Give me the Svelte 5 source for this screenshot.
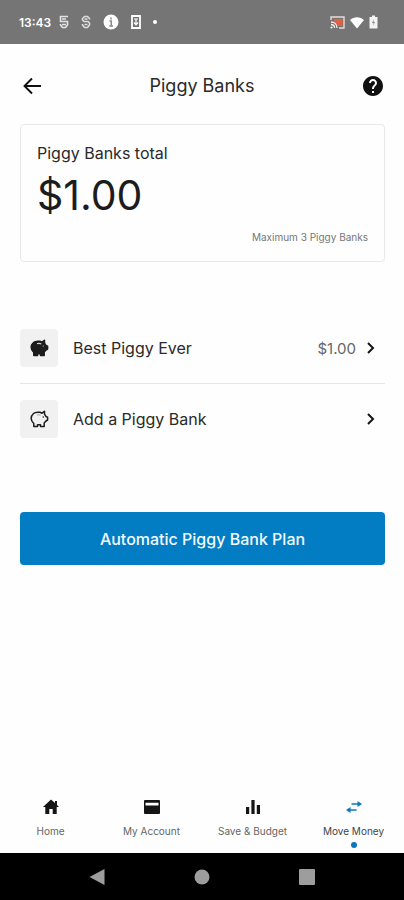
<script lang="ts">
  type Row = {
    id: string;
    label: string;
    amount?: string;
    filled: boolean;
  };

  type Tab = {
    id: string;
    label: string;
  };

  const rows: Row[] = [
    { id: 'best', label: 'Best Piggy Ever', amount: '$1.00', filled: true },
    { id: 'add', label: 'Add a Piggy Bank', filled: false },
  ];

  const tabs: Tab[] = [
    { id: 'home', label: 'Home' },
    { id: 'account', label: 'My Account' },
    { id: 'budget', label: 'Save & Budget' },
    { id: 'move', label: 'Move Money' },
  ];

  let active = $state('move');
</script>

<div class="screen">
  <div class="status">
    <div class="status-left">
      <span class="clock">13:43</span>
      <svg width="10" height="14" viewBox="0 0 10 14" fill="none" stroke="#e4e4e4" stroke-width="1.6">
        <path d="M9 1.5H1.5V6.5H8.5V10L6.5 12.5H3.5L1.5 10V9M3 4H7M3 9.5H7" />
      </svg>
      <svg width="10" height="14" viewBox="0 0 10 14" fill="none" stroke="#dcdcdc" stroke-width="1.6">
        <path d="M8.5 4.5V3.5L6.5 1.5H3.5L1.5 3.5V5L3 6.5H7L8.5 8V10L6.5 12.5H3.5L1.5 10V9M3.5 4H6.5M3.5 9.5H6.5" />
      </svg>
      <svg width="16" height="16" viewBox="0 0 16 16">
        <circle cx="8" cy="8" r="7.5" fill="#fff" />
        <path d="M8 3.5V5.5M6.5 7H8.3V12M6.3 12H10" fill="none" stroke="#8a8a8a" stroke-width="1.5" />
      </svg>
      <svg width="10" height="14" viewBox="0 0 10 14">
        <path d="M1 1H9V13H1Z" fill="none" stroke="#fff" stroke-width="1.8" />
        <path d="M5 3.5V9M3 7.5L5 9.8L7 7.5M3 4H7" fill="none" stroke="#fff" stroke-width="1.2" />
      </svg>
      <span class="more"></span>
    </div>
    <div class="status-right">
      <svg width="15" height="13" viewBox="0 0 15 13">
        <path d="M4 3H12.5V10H8L4 6Z" fill="#e2603f" />
        <path d="M1 4V1H14V12H9" fill="none" stroke="#e8dcd8" stroke-width="1.4" />
        <path d="M1 6C4.5 6 7 8.5 7 12M1 8.500C3 8.5 4.5 10 4.5 12" fill="none" stroke="#f1eeee" stroke-width="1.3" />
        <circle cx="1.5" cy="11.5" r="1" fill="#fff" />
      </svg>
      <svg width="16" height="13" viewBox="0 0 16 13">
        <path d="M1 4C5 0.3 11 0.3 15 4L8 12.5Z" fill="#fff" />
      </svg>
      <svg width="9" height="14" viewBox="0 0 9 14">
        <path d="M3 0.5H6V2H8.5V13.5H0.5V2H3Z" fill="#f4f4f4" />
        <path d="M5 4L3 8H4.5L4 11L6 7H4.6Z" fill="#8a8a8a" />
      </svg>
    </div>
  </div>

  <header class="topbar">
    <button type="button" class="icon-btn" aria-label="Back">
      <svg width="24" height="24" viewBox="0 0 24 24" fill="none" stroke="#111" stroke-width="1.9">
        <path d="M22 12H6M13 4.500L5.500 12L13 19.500" />
      </svg>
    </button>
    <h1>Piggy Banks</h1>
    <button type="button" class="icon-btn" aria-label="Help">
      <svg width="24" height="24" viewBox="0 0 24 24">
        <path fill="#111" d="M12 2C6.48 2 2 6.48 2 12s4.48 10 10 10 10-4.48 10-10S17.52 2 12 2zm1 17h-2v-2h2v2zm2.07-7.75l-.9.92C13.45 12.9 13 13.5 13 15h-2v-.5c0-1.1.45-2.1 1.17-2.83l1.24-1.26c.37-.36.59-.86.59-1.41 0-1.1-.9-2-2-2s-2 .9-2 2H8c0-2.21 1.79-4 4-4s4 1.79 4 4c0 .88-.36 1.68-.93 2.25z" />
      </svg>
    </button>
  </header>

  <main>
    <section class="total">
      <h2>Piggy Banks total</h2>
      <p class="sum">$1.00</p>
      <p class="limit">Maximum 3 Piggy Banks</p>
    </section>

    <div class="rows">
      {#each rows as row (row.id)}
        <button type="button" class="row">
          <span class="tile">
            <svg width="20" height="20" viewBox="0 0 20 20">
              <path
                d="M4.5 4.5C6 3 8.5 3 11 3.3L13 4.2L15.5 2.3V5.2L17 7.5L18.6 8.2V11L17 12L15.2 14V17.5H11.5V15.8H8.5V17.5H4.8V14.5C3 12.8 2.2 11.5 2.2 9.5C2.2 7.5 3 5.8 4.5 4.5Z"
                fill={row.filled ? '#1c1c1c' : 'none'}
                stroke="#1c1c1c"
                stroke-width="1.5"
                stroke-linejoin="round"
              />
              {#if row.filled}
                <path d="M8 5.8C9.5 5.3 11 5.4 12.3 6" fill="none" stroke="#d8d8d8" stroke-width="1.2" />
              {:else}
                <path d="M8 6C9.3 5.6 10.5 5.7 11.6 6.2" fill="none" stroke="#999" stroke-width="0.9" />
              {/if}
              <circle cx="14.3" cy="8" r="0.8" fill={row.filled ? '#888' : '#1c1c1c'} />
            </svg>
          </span>
          <span class="label">{row.label}</span>
          {#if row.amount}<span class="amount">{row.amount}</span>{/if}
          <svg width="10" height="14" viewBox="0 0 10 14" fill="none" stroke="#151515" stroke-width="2">
            <path d="M2 2L7 7L2 12" />
          </svg>
        </button>
      {/each}
    </div>

    <button type="button" class="plan">Automatic Piggy Bank Plan</button>
  </main>

  <nav class="tabs">
    {#each tabs as tab (tab.id)}
      <button type="button" class="tab" class:active={tab.id === active} onclick={() => (active = tab.id)}>
        <svg width="18" height="18" viewBox="0 0 18 18">
          {#if tab.id === 'home'}
            <path d="M9 1.5L13 5V3H15V7L17 9H14.7V16H10.7V11H7.3V16H3.3V9H1Z" fill="currentColor" />
          {:else if tab.id === 'account'}
            <path fill-rule="evenodd" d="M2 2H16Q17 2 17 3V15Q17 16 16 16H2Q1 16 1 15V3Q1 2 2 2ZM2.5 4.8V7.5H15.5V4.8Z" fill="currentColor" />
          {:else if tab.id === 'budget'}
            <path d="M2 9H5.2V16H2ZM7.4 2H10.6V16H7.4ZM12.8 7H16V16H12.8Z" fill="currentColor" />
          {:else}
            <path d="M6.5 6H14M11.5 12H4" fill="none" stroke="currentColor" stroke-width="1.6" />
            <path d="M12.5 3L17 6L12.5 9ZM5.5 9L1 12L5.5 15Z" fill="currentColor" />
          {/if}
        </svg>
        <span class="tab-label">{tab.label}</span>
        <span class="dot"></span>
      </button>
    {/each}
  </nav>

  <div class="sysbar">
    <button type="button" aria-label="System back">
      <svg width="16" height="16" viewBox="0 0 16 16"><path d="M15.5 0V16L0.5 8Z" fill="#9d9d9d" /></svg>
    </button>
    <button type="button" aria-label="System home">
      <svg width="16" height="16" viewBox="0 0 16 16"><circle cx="8" cy="8" r="7.5" fill="#9d9d9d" /></svg>
    </button>
    <button type="button" aria-label="Recent apps">
      <svg width="16" height="16" viewBox="0 0 16 16"><rect width="16" height="16" rx="1" fill="#9d9d9d" /></svg>
    </button>
  </div>
</div>

<style>
  :global(body) {
    margin: 0;
    background: #fff;
  }

  .screen {
    min-height: 100vh;
    display: flex;
    flex-direction: column;
    background: #fefefe;
    color: #2a2a2a;
    font-family: Inter, 'Liberation Sans', sans-serif;
  }

  button {
    margin: 0;
    padding: 0;
    border: 0;
    background: none;
    color: inherit;
    font: inherit;
    cursor: pointer;
  }

  svg {
    display: block;
    flex-shrink: 0;
  }

  h1,
  h2,
  p {
    margin: 0;
    font-weight: 400;
  }

  .status {
    height: 44px;
    padding: 0 26px 0 19px;
    box-sizing: border-box;
    display: flex;
    align-items: center;
    justify-content: space-between;
    background: #757575;
    color: #fff;
  }

  .status-left {
    display: flex;
    align-items: center;
    gap: 12px;
  }

  .clock {
    margin-right: -4px;
    font-size: 12px;
    font-weight: 600;
  }

  .more {
    width: 4px;
    height: 4px;
    border-radius: 50%;
    background: #fff;
  }

  .status-right {
    display: flex;
    align-items: center;
    gap: 4px;
  }

  .topbar {
    height: 80px;
    padding: 4px 19px 0;
    box-sizing: border-box;
    display: flex;
    align-items: center;
    justify-content: space-between;
  }

  h1 {
    font-size: 18px;
    line-height: 24px;
  }

  main {
    flex: 1;
    padding: 0 19px 0 20px;
  }

  .total {
    padding: 16px;
    border: 1px solid #e8e8e8;
    border-radius: 4px;
  }

  h2 {
    font-size: 16px;
    line-height: 24px;
  }

  .sum {
    font-size: 41px;
    line-height: 60px;
    color: #1c1c1c;
  }

  .limit {
    padding-top: 4px;
    font-size: 10px;
    line-height: 16px;
    text-align: right;
    color: #777;
  }

  .rows {
    margin-top: 51px;
  }

  .row {
    width: 100%;
    height: 70px;
    padding-right: 9px;
    display: flex;
    align-items: center;
    text-align: left;
  }

  .row + .row {
    border-top: 1px solid #e6e6e6;
  }

  .tile {
    width: 38px;
    height: 38px;
    margin-right: 15px;
    display: grid;
    place-items: center;
    border-radius: 4px;
    background: #f1f1f1;
  }

  .label {
    flex: 1;
    font-size: 16px;
  }

  .amount {
    margin-right: 10px;
    font-size: 15px;
    color: #666;
  }

  .plan {
    width: 100%;
    height: 53px;
    margin-top: 59px;
    border-radius: 4px;
    background: #027dc3;
    color: #f2faff;
    font-size: 16px;
    font-weight: 500;
  }

  .tabs {
    display: grid;
    grid-template-columns: repeat(4, 1fr);
    padding-bottom: 5px;
  }

  .tab {
    display: flex;
    flex-direction: column;
    align-items: center;
    color: #151515;
  }

  .tab-label {
    margin-top: 7px;
    font-size: 10px;
    line-height: 16px;
    color: #666;
    white-space: nowrap;
  }

  .dot {
    width: 6px;
    height: 6px;
    margin-top: 3px;
    border-radius: 50%;
  }

  .tab.active {
    color: #0a78be;
  }

  .active .tab-label {
    color: #444;
  }

  .active .dot {
    background: #0a78be;
  }

  .sysbar {
    height: 47px;
    padding: 0 44px;
    display: grid;
    grid-template-columns: repeat(3, 1fr);
    background: #000;
  }

  .sysbar button {
    display: grid;
    place-items: center;
  }
</style>
